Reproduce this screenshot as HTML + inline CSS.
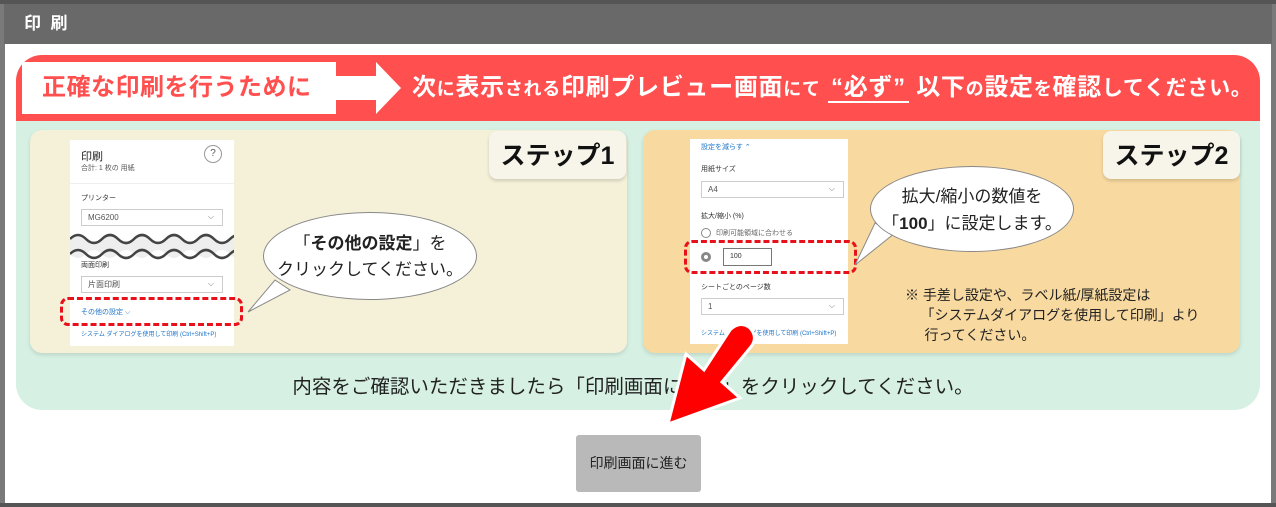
<!DOCTYPE html>
<html><head><meta charset="utf-8">
<style>
*{margin:0;padding:0;box-sizing:border-box}
body{width:1276px;height:507px;background:#7a7a7a;position:relative;overflow:hidden;font-family:"Liberation Sans","Noto Sans CJK JP",sans-serif}
.a{position:absolute}
.hdr{left:4px;top:4px;width:1268px;height:40px;background:#696969;color:#fff;font-weight:bold;font-size:17px;line-height:40px;padding-left:20px;letter-spacing:0}
.body{left:5px;top:44px;width:1266px;height:459px;background:#fff}
.ban{left:16px;top:55px;width:1244px;height:66px;background:#ff4f4f;border-radius:26px 26px 0 0}
.mint{left:16px;top:121px;width:1244px;height:289px;background:#d6f1e3;border-radius:0 0 26px 26px}
.card{border-radius:12px;box-shadow:0 2px 4px rgba(0,0,0,.12)}
.panel{background:#fff;font-size:8px;color:#333}
.sel{position:absolute;border:1px solid #ccc;height:17px;font-size:8px;line-height:15px;padding-left:6px;color:#555}
.sel:after{content:"⌵";position:absolute;right:8px;top:-1px;color:#777}
.tag{background:#f7f4ea;border-radius:8px;font-weight:bold;font-size:25px;color:#111;text-align:center;line-height:50px;box-shadow:0 2px 3px rgba(0,0,0,.15)}
.dash{border:3px dashed #e8101a;border-radius:8px}
.bub{background:#fff;border:1px solid #888;border-radius:50%;text-align:center;white-space:nowrap}
</style></head><body>
<div class="a" style="left:0;top:0;width:1276px;height:4px;background:#555"></div>
<div class="a hdr">印 &nbsp;刷</div>
<div class="a body"></div>
<div class="a ban"></div>
<div class="a" style="left:22px;top:62px;width:314px;height:52px;background:#fff;color:#ff4f4f;font-weight:bold;font-size:24px;line-height:52px;padding-left:20px;white-space:nowrap;letter-spacing:0.5px">正確な印刷を行うために</div>
<svg class="a" style="left:334px;top:62px" width="72" height="52"><polygon points="0,14 42,14 42,0 67,26 42,52 42,38 0,38" fill="#fff"/></svg>
<div class="a" style="left:412px;top:62px;height:52px;line-height:52px;color:#fff;font-weight:bold;font-size:24px;white-space:nowrap;letter-spacing:0.7px">次<span style="font-size:18px">に</span>表示<span style="font-size:18px">される</span>印刷プレビュー画面<span style="font-size:18px">にて</span> <span style="border-bottom:2px solid #fff;padding:0 3px">“必ず”</span> 以下<span style="font-size:18px">の</span>設定<span style="font-size:18px">を</span>確認<span style="font-size:21px">してください。</span></div>
<div class="a mint"></div>
<!-- step 1 -->
<div class="a card" style="left:30px;top:130px;width:597px;height:223px;background:#f5f0d8"></div>
<div class="a tag" style="left:489px;top:131px;width:137px;height:48px">ステップ1</div>
<div class="a panel" style="left:70px;top:140px;width:164px;height:206px">
<div class="a" style="left:11px;top:8px;font-size:11px;color:#222">印刷</div>
<div class="a" style="left:11px;top:23px;font-size:7px;color:#555">合計: 1 枚の 用紙</div>
<div class="a" style="left:134px;top:5px;width:18px;height:18px;border:1px solid #999;border-radius:50%;text-align:center;line-height:16px;font-size:10px;color:#555">?</div>
<div class="a" style="left:0;top:43px;width:164px;height:1px;background:#eee"></div>
<div class="a" style="left:11px;top:53px;font-size:7px">プリンター</div>
<div class="sel" style="left:11px;top:69px;width:142px">MG6200</div>
<svg class="a" style="left:0;top:92px" width="164" height="30"><path d="M0,7 q8,-8 16,0 t16,0 t16,0 t16,0 t16,0 t16,0 t16,0 t16,0 t16,0 t16,0 t16,0 V22 q-8,8 -16,0 t-16,0 t-16,0 t-16,0 t-16,0 t-16,0 t-16,0 t-16,0 t-16,0 t-16,0 t-16,0 z" fill="#eee"/><path d="M0,7 q8,-8 16,0 t16,0 t16,0 t16,0 t16,0 t16,0 t16,0 t16,0 t16,0 t16,0 t16,0 M0,22 q8,-8 16,0 t16,0 t16,0 t16,0 t16,0 t16,0 t16,0 t16,0 t16,0 t16,0 t16,0" fill="none" stroke="#444" stroke-width="2.5"/></svg>
<div class="a" style="left:11px;top:120px;font-size:7px">両面印刷</div>
<div class="sel" style="left:11px;top:136px;width:142px">片面印刷</div>
<div class="a" style="left:11px;top:167px;font-size:7px;color:#1a73c8">その他の設定 ⌵</div>
<div class="a" style="left:11px;top:189px;font-size:6px;color:#1a73c8;white-space:nowrap">システム ダイアログを使用して印刷 (Ctrl+Shift+P)</div>
</div>
<div class="a dash" style="left:60px;top:297px;width:183px;height:29px"></div>
<svg class="a" style="left:245px;top:270px" width="50" height="45"><polygon points="3,42 30,10 45,20" fill="#fff" stroke="#888"/></svg>
<div class="a bub" style="left:263px;top:212px;width:214px;height:88px;padding-top:18px;font-size:17px;line-height:26px;color:#222">「<b>その他の設定</b>」を<br>クリックしてください。</div>
<!-- step 2 -->
<div class="a card" style="left:643px;top:130px;width:597px;height:223px;background:#f8d9a0"></div>
<div class="a tag" style="left:1103px;top:131px;width:137px;height:48px">ステップ2</div>
<div class="a panel" style="left:690px;top:139px;width:158px;height:205px">
<div class="a" style="left:11px;top:3px;font-size:7px;color:#1a73c8">設定を減らす ⌃</div>
<div class="a" style="left:11px;top:25px;font-size:7px">用紙サイズ</div>
<div class="sel" style="left:11px;top:42px;width:143px">A4</div>
<div class="a" style="left:11px;top:72px;font-size:7px">拡大/縮小 (%)</div>
<div class="a" style="left:11px;top:89px;width:10px;height:10px;border:1px solid #888;border-radius:50%"></div>
<div class="a" style="left:26px;top:89px;font-size:7px;color:#666">印刷可能領域に合わせる</div>
<div class="a" style="left:11px;top:113px;width:10px;height:10px;border:3px solid #888;border-radius:50%"></div>
<div class="a" style="left:33px;top:109px;width:49px;height:18px;border:1px solid #777;font-size:7px;line-height:16px;padding-left:6px">100</div>
<div class="a" style="left:11px;top:143px;font-size:7px">シートごとのページ数</div>
<div class="sel" style="left:11px;top:159px;width:143px">1</div>
<div class="a" style="left:11px;top:189px;font-size:6px;color:#1a73c8;white-space:nowrap">システム ダイアログを使用して印刷 (Ctrl+Shift+P)</div>
</div>
<div class="a dash" style="left:684px;top:240px;width:173px;height:34px"></div>
<svg class="a" style="left:850px;top:215px" width="50" height="55"><polygon points="5,50 25,8 45,18" fill="#fff" stroke="#888"/></svg>
<div class="a bub" style="left:870px;top:166px;width:204px;height:86px;padding-top:16px;font-size:17px;line-height:27px;color:#222">拡大/縮小の数値を<br>「<b>100</b>」に設定します。</div>
<div class="a" style="left:905px;top:285px;font-size:14px;line-height:20px;color:#222;white-space:nowrap">※ 手差し設定や、ラベル紙/厚紙設定は<br>&nbsp;&nbsp;&nbsp;&nbsp;「システムダイアログを使用して印刷」より<br>&nbsp;&nbsp;&nbsp;&nbsp;&nbsp;行ってください。</div>
<div class="a" style="left:0;width:1266px;top:370px;text-align:center;font-size:19.5px;color:#222;white-space:nowrap">内容をご確認いただきましたら「印刷画面に進む」をクリックしてください。</div>
<svg class="a" style="left:660px;top:318px" width="100" height="112"><path d="M70,12 Q80,2 90,10 Q99,20 90,30 L62,64 L80,80 L8,106 L26,36 L44,52 Z" fill="#f00" stroke="#fff" stroke-width="3"/></svg>
<div class="a" style="left:576px;top:435px;width:125px;height:57px;background:#b9b9b9;border-radius:3px;text-align:center;line-height:57px;font-size:14px;color:#222">印刷画面に進む</div>
<div class="a" style="left:0;top:503px;width:1276px;height:4px;background:#555"></div>
</body></html>
